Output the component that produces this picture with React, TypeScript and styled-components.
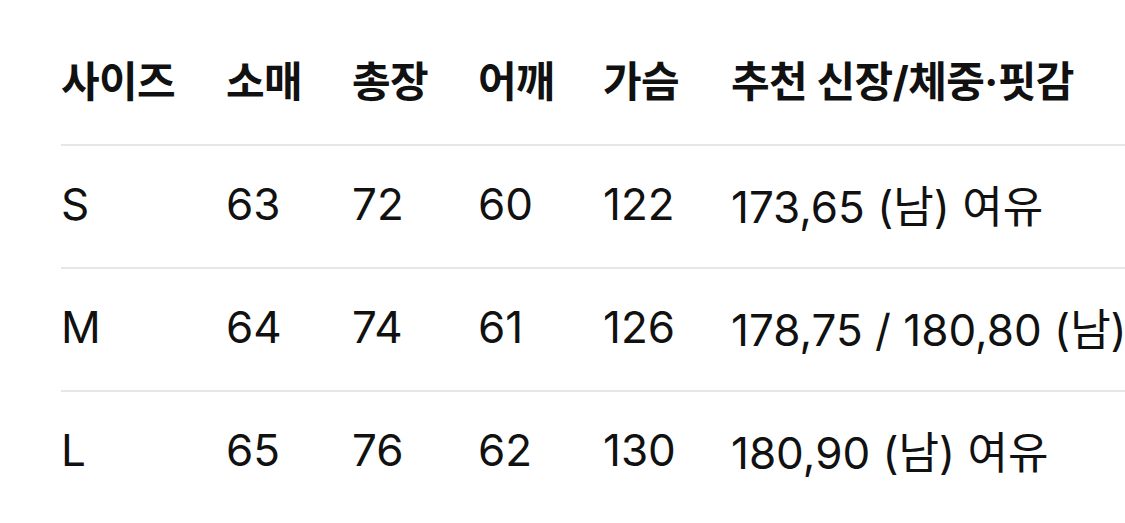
import React from "react";
import styled, { createGlobalStyle } from "styled-components";

interface SizeRow {
  size: string;
  sleeve: number;
  length: number;
  shoulder: number;
  chest: number;
  fit: string;
}

const rows: SizeRow[] = [
  { size: "S", sleeve: 63, length: 72, shoulder: 60, chest: 122, fit: "173,65 (남) 여유" },
  { size: "M", sleeve: 64, length: 74, shoulder: 61, chest: 126, fit: "178,75 / 180,80 (남)" },
  { size: "L", sleeve: 65, length: 76, shoulder: 62, chest: 130, fit: "180,90 (남) 여유" },
];

const headers = ["사이즈", "소매", "총장", "어깨", "가슴", "추천 신장/체중·핏감"];

function App() {
  return (
    <>
      <GlobalStyle />
      <Table>
        <Row>
          {headers.map((h) => (
            <Cell key={h} $head>
              {h}
            </Cell>
          ))}
        </Row>
        {rows.map((r) => (
          <Row key={r.size} $line>
            <Cell>{r.size}</Cell>
            <Cell>{r.sleeve}</Cell>
            <Cell>{r.length}</Cell>
            <Cell>{r.shoulder}</Cell>
            <Cell>{r.chest}</Cell>
            <Cell>{r.fit}</Cell>
          </Row>
        ))}
      </Table>
    </>
  );
}
export default App;

const GlobalStyle = createGlobalStyle`
  html, body {
    margin: 0;
    padding: 0;
    background: #fff;
    overflow: hidden;
  }
  body {
    font-family: Inter, "Noto Sans CJK KR", sans-serif;
    color: #111;
  }
`;

const Table = styled.div`
  padding: 21px 0 0 61px;
`;

const Row = styled.div<{ $line?: boolean }>`
  display: grid;
  grid-template-columns: 165px 126px 126px 125px 128px max-content;
  height: 123px;
  align-items: center;
  border-top: ${(p) => (p.$line ? "2px solid #e6e6e6" : "none")};
  box-sizing: border-box;
  width: 1200px;
`;

const Cell = styled.div<{ $head?: boolean }>`
  font-size: ${(p) => (p.$head ? "42px" : "44px")};
  font-weight: ${(p) => (p.$head ? 700 : 400)};
  letter-spacing: ${(p) => (p.$head ? "-0.6px" : "0")};
  padding-bottom: ${(p) => (p.$head ? "8px" : "6px")};
  white-space: nowrap;
`;
